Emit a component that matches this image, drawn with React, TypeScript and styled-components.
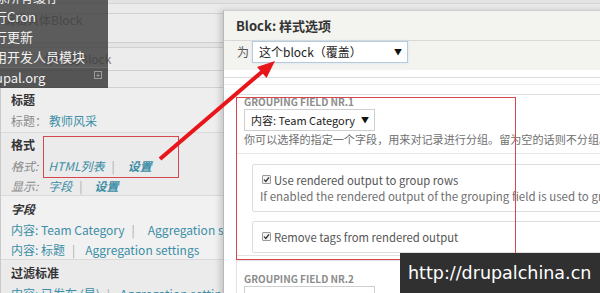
import styled, { createGlobalStyle } from "styled-components";

const GlobalStyle = createGlobalStyle`
  html, body {
    margin: 0;
    padding: 0;
  }
  body {
    width: 600px;
    height: 293px;
    overflow: hidden;
    background: #ebebeb;
  }
`;

const font = `"Noto Sans CJK SC", "DejaVu Sans", sans-serif`;

const Page = styled.div`
  position: relative;
  width: 600px;
  height: 293px;
  overflow: hidden;
  background: #ebebeb;
  font-family: ${font};
`;

const TopStrip = styled.div`
  height: 3px;
  background: #e3e3e3;
  border-bottom: 1px solid #d3d3d3;
`;

const LeftPanel = styled.div`
  width: 223px;
  display: flex;
  flex-direction: column;
`;

const Bar = styled.div<{ $h: number; $indent?: number; $bg?: string }>`
  height: ${p => p.$h}px;
  padding-left: ${p => p.$indent ?? 3}px;
  background: ${p => p.$bg ?? "#ececec"};
  border-bottom: 1px solid #d0d0d0;
  font-size: 12px;
  line-height: ${p => (p.$h > 24 ? 12 : p.$h)}px;
  color: #777;
  white-space: nowrap;
  overflow: hidden;
`;

const Body = styled.div`
  display: flex;
`;

const Gutter = styled.div`
  width: 13px;
  background: #e2e2e2;
  border-right: 1px solid #c9c9c9;
`;

const Content = styled.div`
  flex: 1;
  display: flex;
  flex-direction: column;
`;

const Section = styled.div<{ $top: number; $bottom?: number; $bg: string }>`
  padding: ${p => p.$top}px 0 ${p => p.$bottom ?? 0}px 10px;
  background: ${p => p.$bg};
  border-bottom: 1px solid #dadada;
`;

const Heading = styled.div<{ $italic?: boolean }>`
  height: 20px;
  line-height: 20px;
  font-size: 12px;
  font-weight: bold;
  color: #333;
  font-style: ${p => (p.$italic ? "italic" : "normal")};
`;

const Row = styled.div`
  height: 20px;
  display: flex;
  align-items: center;
  font-size: 12px;
  color: #888;
  white-space: nowrap;
`;

const Label = styled.span<{ $italic?: boolean; $gap: number }>`
  color: #8a8a8a;
  font-style: ${p => (p.$italic ? "italic" : "normal")};
  margin-right: ${p => p.$gap}px;
`;

const Link = styled.span<{ $italic?: boolean; $bold?: boolean }>`
  color: #3c8ea6;
  font-style: ${p => (p.$italic ? "italic" : "normal")};
  font-weight: ${p => (p.$bold ? "bold" : "normal")};
`;

const Pipe = styled.span<{ $after?: number }>`
  color: #aaa;
  margin: 0 ${p => p.$after ?? 10}px 0 7px;
`;

/* dark admin dropdown lying over the top-left corner */
const Menu = styled.div`
  position: absolute;
  left: -27px;
  top: -13px;
  width: 135px;
  background: rgba(62, 62, 62, 0.83);
  color: #f2f2f2;
  font-size: 13px;
`;

const MenuItem = styled.div<{ $last?: boolean }>`
  height: 20px;
  line-height: 20px;
  padding: 0 6px 0 8px;
  display: flex;
  justify-content: space-between;
  align-items: ${p => (p.$last ? "flex-start" : "center")};
  white-space: nowrap;
  background: ${p => (p.$last ? "rgba(0,0,0,0.07)" : "transparent")};
  border-top: ${p => (p.$last ? "1px solid rgba(255,255,255,0.12)" : "none")};
`;

const PlusBox = styled.span`
  width: 6px;
  height: 6px;
  margin-top: 3px;
  border: 1px solid #9c9c9c;
  color: #bdbdbd;
  font-size: 7px;
  line-height: 6px;
  text-align: center;
`;

/* modal dialog */
const Dialog = styled.div`
  position: absolute;
  left: 223px;
  top: 10px;
  width: 420px;
  height: 300px;
  background: #fff;
  border-left: 1px solid #b8b8b8;
  border-top: 1px solid #cfcfcf;
  box-shadow: -3px 0 6px rgba(0, 0, 0, 0.16);
  display: flex;
  flex-direction: column;
`;

const DialogHeader = styled.div`
  height: 30px;
  padding-left: 12px;
  background: #f3f3ef;
  border-bottom: 1px solid #d8d8d8;
  display: flex;
  align-items: center;
  font-size: 13px;
  font-weight: bold;
  color: #333;
`;

const ForRow = styled.div`
  height: 30px;
  padding-left: 13px;
  background: #f3f3ef;
  display: flex;
  align-items: flex-start;
  font-size: 12px;
  color: #555;
`;

const ForLabel = styled.span`
  line-height: 22px;
  width: 15px;
`;

const Select = styled.div<{ $w: number; $focus?: boolean }>`
  width: ${p => p.$w}px;
  height: 22px;
  box-sizing: border-box;
  padding: 0 5px 0 6px;
  background: #fff;
  border: 1px solid ${p => (p.$focus ? "#b5cbdc" : "#cfcfcf")};
  box-shadow: ${p => (p.$focus ? "0 0 2px #cfe1ef" : "none")};
  display: flex;
  align-items: center;
  justify-content: space-between;
  font-size: ${p => (p.$focus ? 12 : 11)}px;
  color: #222;
  white-space: nowrap;
`;

const Caret = styled.span`
  flex-shrink: 0;
  margin-left: 6px;
  font-size: 8px;
  color: #111;
`;

const Rule = styled.div<{ $h: number; $c: string }>`
  height: ${p => p.$h}px;
  border-bottom: 1px solid ${p => p.$c};
`;

const Fieldset = styled.div<{ $top: number }>`
  margin: ${p => p.$top}px 0 0 12px;
  padding: 0 7px 2px;
  border: 1px solid #e2e2e2;
`;

const Legend = styled.div<{ $pad: number }>`
  padding-top: ${p => p.$pad}px;
  height: 11px;
  line-height: 11px;
  font-size: 10px;
  font-weight: bold;
  color: #8c8c8c;
  text-transform: uppercase;
`;

const FieldSelect = styled(Select)`
  margin-top: 2px;
`;

const Description = styled.div<{ $size?: number }>`
  height: 16px;
  line-height: 16px;
  font-size: ${p => p.$size ?? 11.1}px;
  color: #707070;
  white-space: nowrap;
`;

const Divider = styled.div`
  margin: 6px 0 0 -7px;
  border-top: 1px solid #e6e6e6;
`;

const OptionBox = styled.div<{ $top: number }>`
  margin: ${p => p.$top}px 0 0 8px;
  padding: 7px 8px 7px 7px;
  border: 1px solid #dedede;
  border-radius: 2px;
`;

const CheckRow = styled.div`
  height: 16px;
  padding-left: 2px;
  display: flex;
  align-items: center;
  font-size: 11.3px;
  color: #555;
  white-space: nowrap;
`;

const Check = styled.span`
  width: 9px;
  height: 9px;
  margin-right: 3px;
  box-sizing: border-box;
  border: 1px solid #9a9a9a;
  border-radius: 1px;
  background: #f3f3f3;
  display: inline-flex;
  align-items: center;
  justify-content: center;
  svg {
    width: 7px;
    height: 7px;
  }
`;

/* red annotations */
const MarkBox = styled.div<{ $x: number; $y: number; $w: number; $h: number }>`
  position: absolute;
  left: ${p => p.$x}px;
  top: ${p => p.$y}px;
  width: ${p => p.$w}px;
  height: ${p => p.$h}px;
  box-sizing: border-box;
  border: 1.5px solid #d5484e;
  pointer-events: none;
`;

const ArrowLayer = styled.svg`
  position: absolute;
  left: 0;
  top: 0;
  pointer-events: none;
`;

const Watermark = styled.div`
  position: absolute;
  right: 0;
  bottom: 0;
  width: 200px;
  height: 40px;
  box-sizing: border-box;
  padding-left: 8px;
  background: #303030;
  color: #fff;
  font-family: "DejaVu Sans", sans-serif;
  font-size: 17.5px;
  line-height: 40px;
`;

function Tick() {
  return (
    <Check>
      <svg viewBox="0 0 10 10">
        <path d="M1.5 5.2 L4 7.8 L8.6 2" stroke="#333" strokeWidth="1.9" fill="none" />
      </svg>
    </Check>
  );
}

export default function App() {
  return (
    <>
      <GlobalStyle />
      <Page>
        <TopStrip />
        <LeftPanel>
          <Bar $h={9} $bg="#ebebeb" />
          <Bar $h={28}>编辑具体Block</Bar>
          <Bar $h={4} $bg="#e4e4e4" />
          <Bar $h={22} $indent={44}>停用此Block</Bar>
          <Bar $h={16} />
          <Body>
            <Gutter />
            <Content>
              <Section $top={2} $bottom={2} $bg="#eeeeee">
                <Heading>标题</Heading>
                <Row>
                  <Label $gap={2}>标题：</Label>
                  <Link>教师风采</Link>
                </Row>
              </Section>
              <Section $top={2} $bg="#ebebeb">
                <Heading>格式</Heading>
                <Row>
                  <Label $italic $gap={10}>格式:</Label>
                  <Link $italic>HTML列表</Link>
                  <Pipe $after={13}>|</Pipe>
                  <Link $italic $bold>设置</Link>
                </Row>
                <Row>
                  <Label $italic $gap={10}>显示:</Label>
                  <Link $italic>字段</Link>
                  <Pipe $after={12}>|</Pipe>
                  <Link $italic $bold>设置</Link>
                </Row>
              </Section>
              <Section $top={3} $bg="#f1f1f1">
                <Heading $italic>字段</Heading>
                <Row>
                  <Link>内容: Team Category</Link>
                  <Pipe $after={13}>|</Pipe>
                  <Link>Aggregation settings</Link>
                </Row>
                <Row>
                  <Link>内容: 标题</Link>
                  <Pipe>|</Pipe>
                  <Link>Aggregation settings</Link>
                </Row>
              </Section>
              <Section $top={3} $bg="#ebebeb">
                <Heading>过滤标准</Heading>
                <Row>
                  <Link>内容: 已发布 (是)</Link>
                  <Pipe>|</Pipe>
                  <Link>Aggregation settings</Link>
                </Row>
              </Section>
            </Content>
          </Body>
        </LeftPanel>

        <Menu>
          <MenuItem>清除所有缓存</MenuItem>
          <MenuItem>运行Cron</MenuItem>
          <MenuItem>运行更新</MenuItem>
          <MenuItem>启用开发人员模块</MenuItem>
          <MenuItem $last>
            Drupal.org
            <PlusBox>+</PlusBox>
          </MenuItem>
        </Menu>

        <Dialog>
          <DialogHeader>Block: 样式选项</DialogHeader>
          <ForRow>
            <ForLabel>为</ForLabel>
            <Select $w={156} $focus>
              这个block（覆盖）
              <Caret>▼</Caret>
            </Select>
          </ForRow>
          <Rule $h={8} $c="#dcdcdc" />
          <Rule $h={6} $c="#ececec" />
          <Fieldset $top={9}>
            <Legend $pad={1}>Grouping field Nr.1</Legend>
            <FieldSelect $w={131}>
              内容: Team Category
              <Caret>▼</Caret>
            </FieldSelect>
            <Description>你可以选择的指定一个字段，用来对记录进行分组。留为空的话则不分组。</Description>
            <Divider />
            <OptionBox $top={10}>
              <CheckRow>
                <Tick />
                Use rendered output to group rows
              </CheckRow>
              <Description $size={11.5}>
                If enabled the rendered output of the grouping field is used to group the rows.
              </Description>
            </OptionBox>
            <OptionBox $top={9}>
              <CheckRow>
                <Tick />
                Remove tags from rendered output
              </CheckRow>
            </OptionBox>
          </Fieldset>
          <Fieldset $top={4}>
            <Legend $pad={12}>Grouping field Nr.2</Legend>
            <FieldSelect $w={131}>
              - 无 -
              <Caret>▼</Caret>
            </FieldSelect>
          </Fieldset>
        </Dialog>

        <MarkBox $x={43} $y={136} $w={136} $h={42} />
        <MarkBox $x={236} $y={97} $w={280} $h={163} />
        <ArrowLayer width={600} height={293} viewBox="0 0 600 293">
          <line x1="160" y1="159" x2="263" y2="71" stroke="#e8161b" strokeWidth="4" />
          <polygon points="275,61 266.5,78 257,67" fill="#e8161b" />
        </ArrowLayer>

        <Watermark>http://drupalchina.cn</Watermark>
      </Page>
    </>
  );
}
